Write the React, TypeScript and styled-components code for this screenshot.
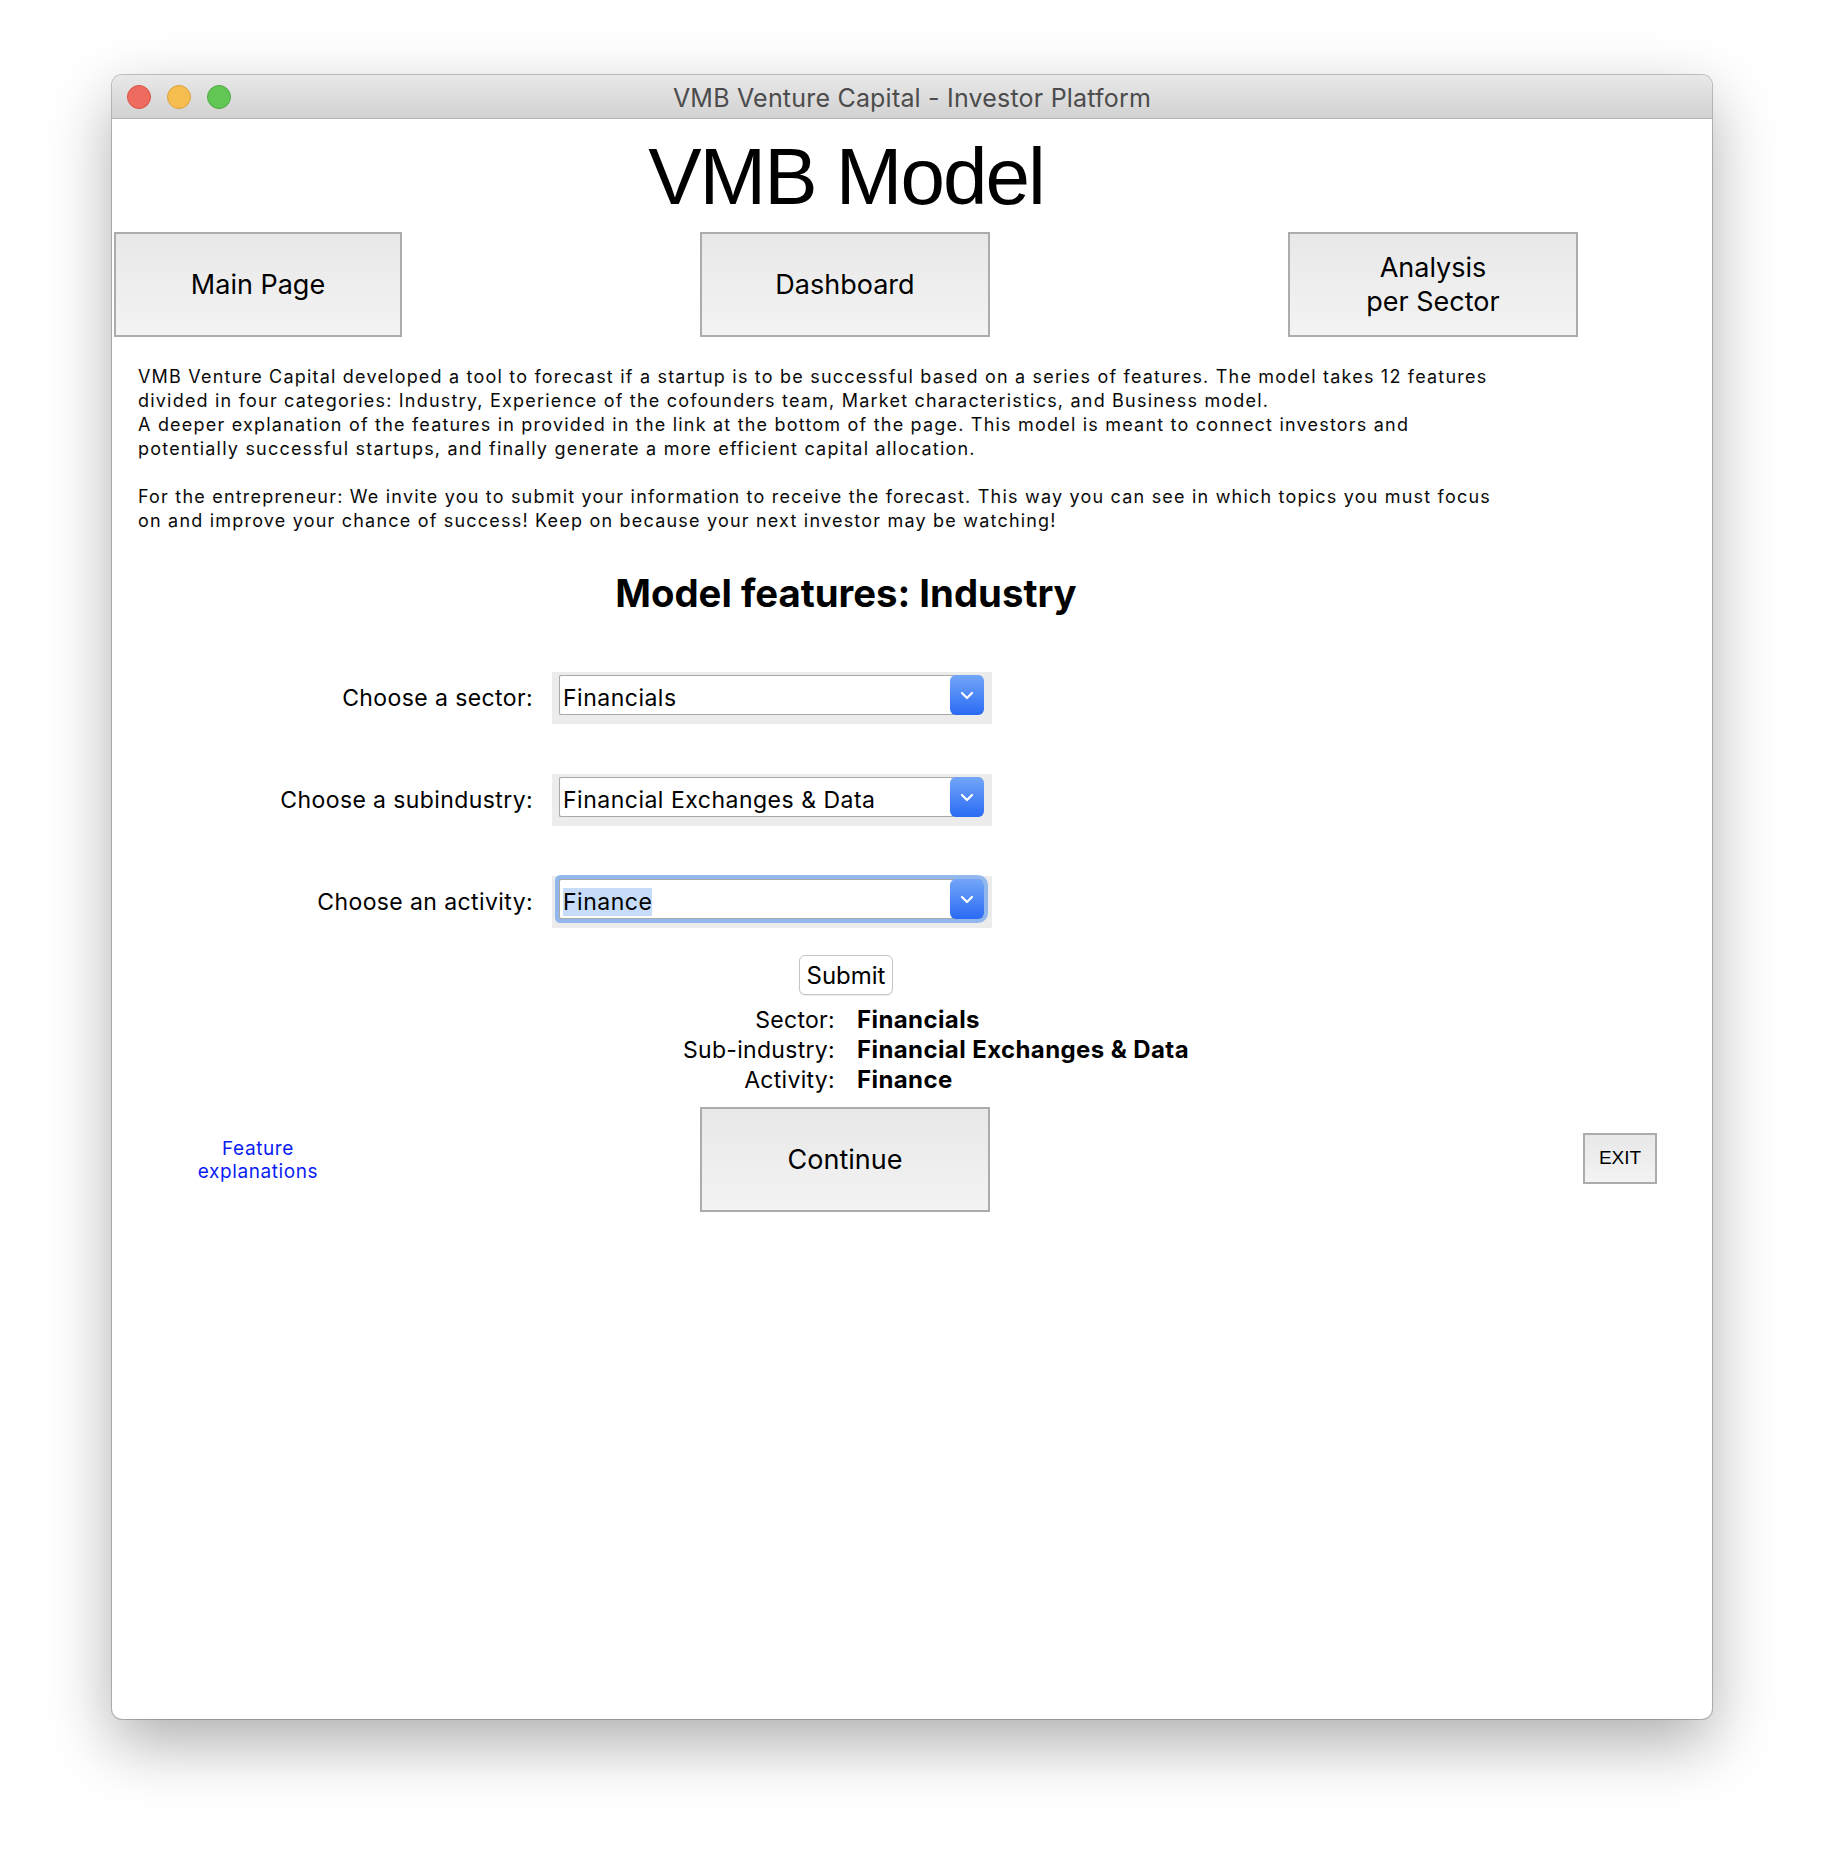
import React from 'react';
import styled, { createGlobalStyle } from 'styled-components';

const GlobalStyle = createGlobalStyle`
  html, body {
    margin: 0;
    padding: 0;
    background: #ffffff;
  }
  body {
    font-family: Inter, "Noto Sans", sans-serif;
    color: #000;
  }
  * {
    box-sizing: border-box;
  }
`;

const Page = styled.div`
  width: 1824px;
  height: 1868px;
  padding: 75px 0 0 112px;
`;

const Window = styled.div`
  width: 1600px;
  height: 1644px;
  background: #ffffff;
  border-radius: 10px;
  overflow: hidden;
  box-shadow: 0 0 0 1px rgba(0, 0, 0, 0.22), 0 24px 64px rgba(0, 0, 0, 0.32);
`;

const TitleBar = styled.div`
  height: 44px;
  display: grid;
  grid-template-columns: 1fr auto 1fr;
  align-items: center;
  padding: 0 15px;
  background: linear-gradient(#e9e8e9, #d2d2d2);
  border-bottom: 1px solid #b3b3b3;
`;

const Lights = styled.div`
  display: flex;
  gap: 16px;
  padding-top: 1px;
`;

const Light = styled.span<{ $color: string; $edge: string }>`
  width: 24px;
  height: 24px;
  border-radius: 50%;
  background: ${(p) => p.$color};
  border: 1px solid ${(p) => p.$edge};
`;

const WindowTitle = styled.div`
  padding-top: 3px;
  font-size: 25px;
  color: #4c4c4c;
  letter-spacing: 0.2px;
`;

const Content = styled.div`
  width: 1466px;
  padding-left: 2px;
`;

const Title = styled.h1`
  margin: 18px 0 0;
  font-family: "Liberation Sans", Arial, sans-serif;
  font-size: 80px;
  font-weight: 400;
  line-height: 80px;
  letter-spacing: -2px;
  text-align: center;
`;

const NavRow = styled.div`
  display: flex;
  justify-content: space-between;
  margin-top: 15px;
`;

const NavButton = styled.button<{ $width?: number }>`
  flex-shrink: 0;
  width: ${(p) => p.$width ?? 290}px;
  height: 105px;
  display: flex;
  align-items: center;
  justify-content: center;
  padding: 0;
  border: 2px solid #acacac;
  background: linear-gradient(#e8e8e8, #f3f3f3);
  font-family: Inter, sans-serif;
  font-size: 27px;
  line-height: 34px;
  color: #000;
  text-align: center;
`;

const Intro = styled.div`
  margin-top: 28px;
  padding-left: 24px;
  font-size: 18px;
  line-height: 24px;
  letter-spacing: 1.2px;
  color: #0a0a0a;
  white-space: nowrap;
`;

const SectionTitle = styled.h2`
  margin: 36px 0 0;
  font-size: 38.3px;
  font-weight: 700;
  line-height: 48px;
  text-align: center;
`;

const FormGrid = styled.div`
  display: grid;
  grid-template-columns: 419px 440px;
  column-gap: 19px;
  row-gap: 50px;
  align-items: center;
  margin-top: 55px;
`;

const FieldLabel = styled.label`
  font-size: 23px;
  text-align: right;
  letter-spacing: 0.4px;
`;

const ComboFrame = styled.div`
  height: 52px;
  background: #ececec;
  padding: 3px 8px 9px 7px;
`;

const ComboField = styled.div<{ $focused?: boolean }>`
  height: 40px;
  display: flex;
  background: #ffffff;
  border: 1px solid #a9a9a9;
  border-right: none;
  border-radius: 2px 6px 6px 2px;
  box-shadow: ${(p) => (p.$focused ? '0 0 0 4px rgba(116, 165, 238, 0.75)' : 'none')};
`;

const ComboValue = styled.div`
  flex: 1;
  padding: 7px 0 0 3px;
  font-size: 23px;
  line-height: 30px;
  letter-spacing: 0.5px;
  white-space: nowrap;
`;

const Selected = styled.span`
  background: #c6dcf8;
`;

const ArrowButton = styled.div`
  width: 34px;
  margin: -1px 0;
  border-radius: 6px;
  background: linear-gradient(#73a6f8, #2a6bf5);
  display: flex;
  align-items: center;
  justify-content: center;
`;

const SubmitButton = styled.button`
  display: block;
  width: 94px;
  height: 40px;
  margin: 27px auto 0;
  padding: 0;
  border: 1px solid #c6c6c6;
  border-radius: 6px;
  background: #ffffff;
  box-shadow: 0 1px 1px rgba(0, 0, 0, 0.08);
  font-family: Inter, sans-serif;
  font-size: 24px;
  color: #000;
`;

const Results = styled.div`
  display: grid;
  grid-template-columns: 721px auto;
  column-gap: 22px;
  margin-top: 10px;
  font-size: 23px;
  line-height: 30px;
`;

const ResultLabel = styled.div`
  text-align: right;
  letter-spacing: 0.3px;
`;

const ResultValue = styled.div`
  font-size: 24px;
  font-weight: 700;
  letter-spacing: 0.4px;
`;

const BottomRow = styled.div`
  display: flex;
  align-items: center;
  margin-top: 12px;
`;

const LinkCell = styled.a`
  flex-shrink: 0;
  width: 288px;
  text-align: center;
  color: #0a1cf5;
  font-size: 19px;
  line-height: 23px;
  letter-spacing: 0.6px;
  text-decoration: none;
`;

const ContinueButton = styled(NavButton)`
  margin-left: 298px;
`;

const ExitButton = styled.button`
  flex-shrink: 0;
  width: 74px;
  height: 51px;
  margin-left: 593px;
  margin-top: -3px;
  padding: 0;
  border: 2px solid #acacac;
  background: linear-gradient(#e8e8e8, #f3f3f3);
  font-family: "Liberation Sans", Arial, sans-serif;
  font-size: 19px;
  color: #000;
`;

const Chevron = () => (
  <svg width="14" height="9" viewBox="0 0 14 9">
    <path d="M2 2 L7 7 L12 2" fill="none" stroke="#ffffff" strokeWidth="2.2" strokeLinecap="round" strokeLinejoin="round" />
  </svg>
);

interface ComboProps {
  value: string;
  focused?: boolean;
}

const Combo: React.FC<ComboProps> = ({ value, focused }) => (
  <ComboFrame>
    <ComboField $focused={focused}>
      <ComboValue>{focused ? <Selected>{value}</Selected> : value}</ComboValue>
      <ArrowButton>
        <Chevron />
      </ArrowButton>
    </ComboField>
  </ComboFrame>
);

const introLines = [
  'VMB Venture Capital developed a tool to forecast if a startup is to be successful based on a series of features. The model takes 12 features',
  'divided in four categories: Industry, Experience of the cofounders team, Market characteristics, and Business model.',
  'A deeper explanation of the features in provided in the link at the bottom of the page. This model is meant to connect investors and',
  'potentially successful startups, and finally generate a more efficient capital allocation.',
  '',
  'For the entrepreneur: We invite you to submit your information to receive the forecast. This way you can see in which topics you must focus',
  'on and improve your chance of success! Keep on because your next investor may be watching!',
];

const App: React.FC = () => {
  return (
    <>
      <GlobalStyle />
      <Page>
        <Window>
          <TitleBar>
            <Lights>
              <Light $color="#ee6b60" $edge="#d75247" />
              <Light $color="#f6be50" $edge="#dca03a" />
              <Light $color="#62c655" $edge="#4ea83f" />
            </Lights>
            <WindowTitle>VMB Venture Capital - Investor Platform</WindowTitle>
            <div />
          </TitleBar>
          <Content>
            <Title>VMB Model</Title>
            <NavRow>
              <NavButton $width={288}>Main Page</NavButton>
              <NavButton>Dashboard</NavButton>
              <NavButton>
                Analysis
                <br />
                per Sector
              </NavButton>
            </NavRow>
            <Intro>
              {introLines.map((line, i) => (
                <div key={i}>{line || '\u00a0'}</div>
              ))}
            </Intro>
            <SectionTitle>Model features: Industry</SectionTitle>
            <FormGrid>
              <FieldLabel>Choose a sector:</FieldLabel>
              <Combo value="Financials" />
              <FieldLabel>Choose a subindustry:</FieldLabel>
              <Combo value="Financial Exchanges & Data" />
              <FieldLabel>Choose an activity:</FieldLabel>
              <Combo value="Finance" focused />
            </FormGrid>
            <SubmitButton>Submit</SubmitButton>
            <Results>
              <ResultLabel>Sector:</ResultLabel>
              <ResultValue>Financials</ResultValue>
              <ResultLabel>Sub-industry:</ResultLabel>
              <ResultValue>Financial Exchanges &amp; Data</ResultValue>
              <ResultLabel>Activity:</ResultLabel>
              <ResultValue>Finance</ResultValue>
            </Results>
            <BottomRow>
              <LinkCell href="#">
                Feature
                <br />
                explanations
              </LinkCell>
              <ContinueButton>Continue</ContinueButton>
              <ExitButton>EXIT</ExitButton>
            </BottomRow>
          </Content>
        </Window>
      </Page>
    </>
  );
};

export default App;
